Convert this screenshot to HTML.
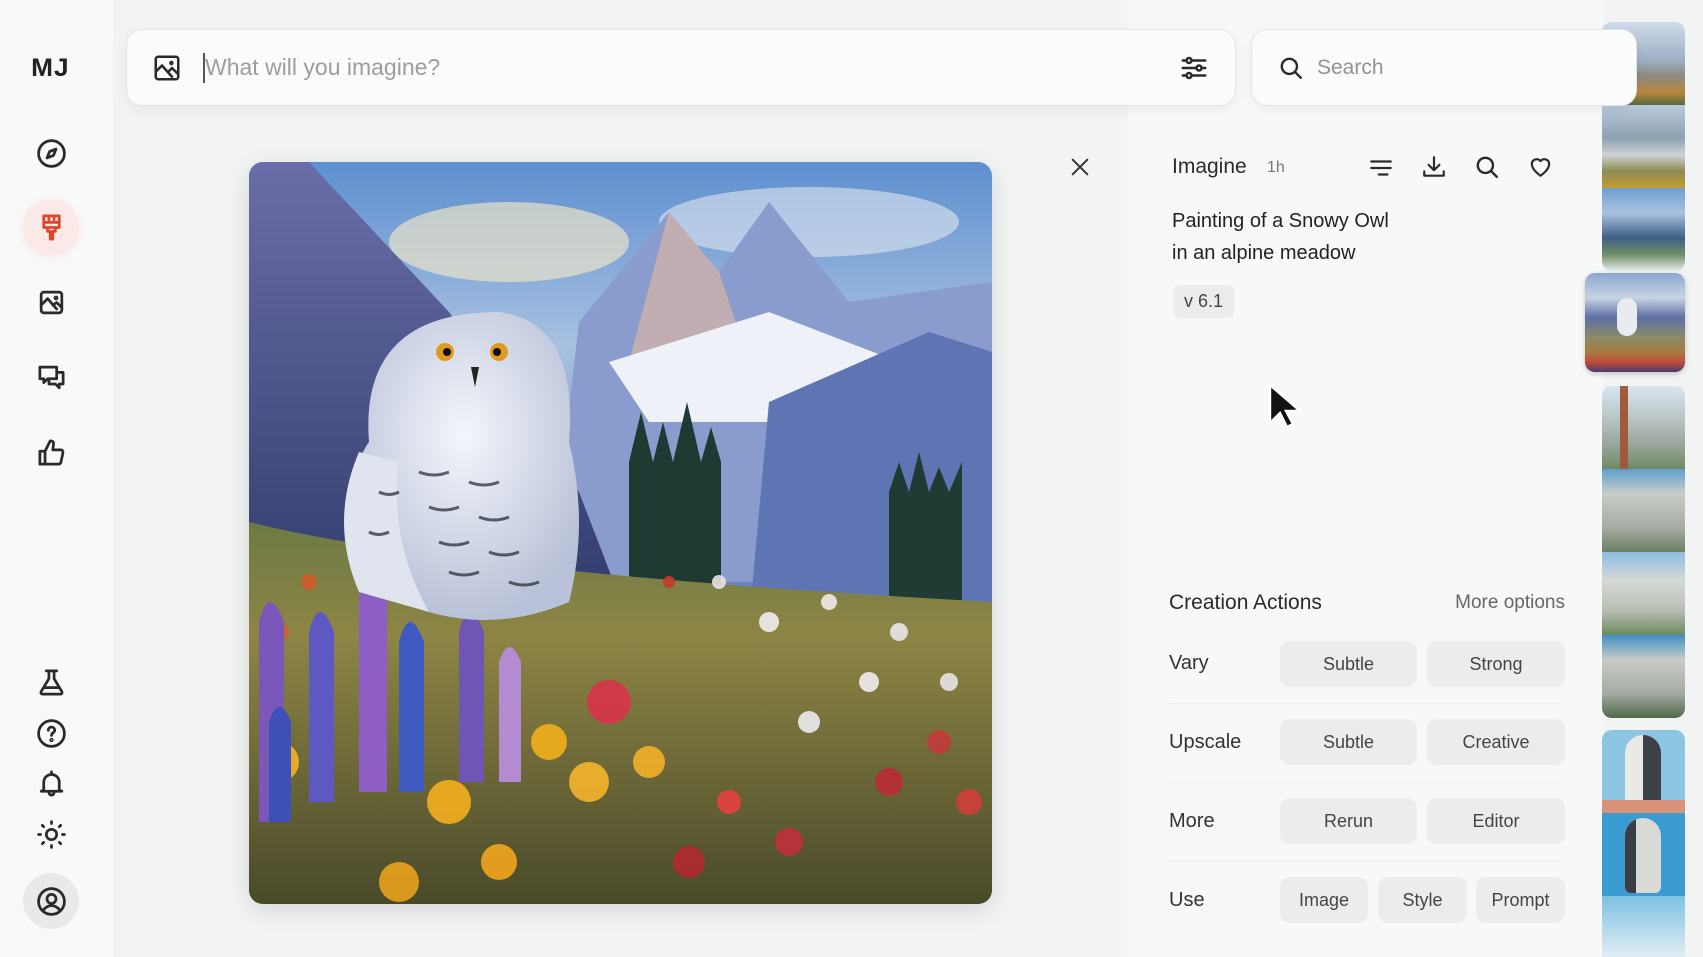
<!DOCTYPE html>
<html><head><meta charset="utf-8"><style>
*{margin:0;padding:0;box-sizing:border-box}
body{width:1703px;height:957px;overflow:hidden;background:#f2f3f3;font-family:"Liberation Sans",sans-serif;color:#222;position:relative}
.abs{position:absolute}
.side{left:0;top:0;width:113px;height:957px;background:#f8f9f9}
.ico{position:absolute;left:31px;width:40px;height:40px;display:flex;align-items:center;justify-content:center}
.ico svg{width:31px;height:31px;fill:none;stroke:#2a2a2a;stroke-width:2.1;stroke-linecap:round;stroke-linejoin:round}
.bar{background:#fafbfb;border:1px solid #e3e4e5;border-radius:16px;box-shadow:0 4px 14px rgba(0,0,0,.05)}
.right{left:1127px;top:0;width:476px;height:957px;background:#f7f8f8}
.btn{position:absolute;height:46px;background:#ebeded;border-radius:10px;display:flex;align-items:center;justify-content:center;font-size:18px;color:#444}
.lbl{position:absolute;left:1169px;font-size:20px;color:#333}
.sep{position:absolute;left:1169px;width:395px;height:1px;background:#ececec}
.th{position:absolute;left:1602px;width:83px}
</style></head><body>
<div class="abs side"></div>
<div class="abs" style="left:32px;top:54px;font-size:25px;font-weight:bold;letter-spacing:1px;color:#222;transform:scaleX(1.05)">MJ</div>

<div class="ico" style="top:133px"><svg viewBox="0 0 24 24"><circle cx="12" cy="12" r="10"/><path d="M15.5 8.5l-2 5-5 2 2-5z"/></svg></div>
<div class="abs" style="left:23px;top:199px;width:56px;height:56px;border-radius:50%;background:#fbe9e7;box-shadow:0 2px 8px rgba(220,80,60,.1)"></div>
<div class="ico" style="top:207px"><svg viewBox="0 0 24 24" style="stroke:#e0442a"><path d="M6 3h12v9H6z M6 8h12 M10 3v3 M14 3v3 M9 12v3h2v6h2v-6h2v-3"/></svg></div>
<div class="ico" style="top:282px"><svg viewBox="0 0 24 24"><rect x="4" y="4" width="16" height="16" rx="2"/><path d="M4 14l5-5 7 8 M13 14l3-2 4 4"/><circle cx="15.5" cy="8.5" r=".8"/></svg></div>
<div class="ico" style="top:357px"><svg viewBox="0 0 24 24"><path d="M3 4h13v9H9l-3 3v-3H3z M16 8h5v9h-3v3l-3-3h-5v-4"/></svg></div>
<div class="ico" style="top:432px"><svg viewBox="0 0 24 24"><path d="M3 11h4v10H3z M7 11l4-8c2 0 3 1 2.5 3L13 10h6c1.5 0 2 1 1.8 2.5l-1.5 7c-.3 1-1 1.5-2 1.5H7"/></svg></div>
<div class="ico" style="top:662px"><svg viewBox="0 0 24 24"><path d="M8 3h8 M10 3v6l-6 10c-.5 1 0 2 1 2h14c1 0 1.5-1 1-2l-6-10V3 M6 16h12"/></svg></div>
<div class="ico" style="top:713px"><svg viewBox="0 0 24 24"><circle cx="12" cy="12" r="10"/><path d="M9.5 9.5a2.5 2.5 0 0 1 5 0c0 1.8-2.5 2-2.5 4"/><circle cx="12" cy="17" r=".6"/></svg></div>
<div class="ico" style="top:763px"><svg viewBox="0 0 24 24"><path d="M6 17V11a6 6 0 0 1 12 0v6l2 1H4z M10 19a2 2 0 0 0 4 0 M12 3v2"/></svg></div>
<div class="ico" style="top:814px"><svg viewBox="0 0 24 24"><circle cx="12" cy="12" r="4"/><path d="M12 2v1.5M12 20.5V22M2 12h1.5M20.5 12H22M4.9 4.9l1 1M18.1 18.1l1 1M4.9 19.1l1-1M18.1 5.9l1-1"/></svg></div>
<div class="abs" style="left:23px;top:873px;width:56px;height:56px;border-radius:50%;background:#e8e9e9"></div>
<div class="ico" style="top:881px"><svg viewBox="0 0 24 24"><circle cx="12" cy="12" r="10"/><circle cx="12" cy="10" r="3.5"/><path d="M5.5 19c2-3 4-3.8 6.5-3.8s4.5.8 6.5 3.8"/></svg></div>

<div class="abs right"></div>

<!-- thumbnails -->
<div class="th" style="top:22px;height:83px;border-radius:10px 10px 0 0;background:linear-gradient(180deg,#cfdceb 0%,#9fb1c6 45%,#8d8a80 65%,#b8863c 85%,#5a6a40 100%)"></div>
<div class="th" style="top:105px;height:83px;background:linear-gradient(180deg,#b9cadc 0%,#8ea2b4 40%,#cfd3d5 60%,#8b8c52 80%,#c79b2f 100%)"></div>
<div class="th" style="top:188px;height:83px;border-radius:0 0 10px 10px;background:linear-gradient(180deg,#6f9dd0 0%,#a9c3e0 30%,#3e5f86 60%,#6f8f64 80%,#e7ecef 100%)"></div>
<div class="abs" style="left:1585px;top:273px;width:100px;height:99px;border-radius:10px;background:linear-gradient(180deg,#8ba7cf 0%,#c7d3e3 25%,#5d6fa4 45%,#8b8a68 65%,#a87b3f 80%,#c04a3a 90%,#4b3c6a 100%);box-shadow:0 2px 6px rgba(0,0,0,.2)"></div>
<div class="abs" style="left:1617px;top:298px;width:20px;height:38px;border-radius:10px;background:#e8ebf0"></div>
<div class="th" style="top:386px;height:83px;border-radius:10px 10px 0 0;background:linear-gradient(180deg,#d8e6f2 0%,#b9c3c4 40%,#9aa59c 70%,#6f8a63 100%)"></div>
<div class="abs" style="left:1620px;top:386px;width:8px;height:83px;background:#9e5a3a"></div>
<div class="th" style="top:469px;height:83px;background:linear-gradient(180deg,#5c9fcf 0%,#c9cdc8 30%,#a7aca6 70%,#6a8062 100%)"></div>
<div class="th" style="top:552px;height:83px;background:linear-gradient(180deg,#8fbde0 0%,#d6d9d6 35%,#b8beb4 70%,#6b8a5f 100%)"></div>
<div class="th" style="top:635px;height:83px;border-radius:0 0 10px 10px;background:linear-gradient(180deg,#3f8fc7 0%,#c8cbc6 30%,#a6aba4 70%,#4f6a48 100%)"></div>
<div class="th" style="top:730px;height:83px;border-radius:10px 10px 0 0;background:linear-gradient(180deg,#8cc6e3 0%,#8cc6e3 100%)"></div>
<div class="abs" style="left:1625px;top:735px;width:36px;height:72px;border-radius:18px 18px 6px 6px;background:linear-gradient(90deg,#e9e9e6 50%,#3d4147 50%)"></div>
<div class="abs" style="left:1602px;top:800px;width:83px;height:13px;background:#d9937d"></div>
<div class="th" style="top:813px;height:83px;background:#3b9ad0"></div>
<div class="abs" style="left:1625px;top:818px;width:36px;height:75px;border-radius:18px 18px 6px 6px;background:linear-gradient(90deg,#3a3e44 30%,#d9d9d5 30%)"></div>
<div class="th" style="top:896px;height:61px;background:linear-gradient(180deg,#7ec1e2 0%,#e0eef4 100%)"></div>

<!-- prompt bar -->
<div class="abs bar" style="left:126px;top:29px;width:1110px;height:77px"></div>
<svg class="abs" style="left:152px;top:53px" width="30" height="30" viewBox="0 0 24 24" fill="none" stroke="#2a2a2a" stroke-width="2" stroke-linecap="round" stroke-linejoin="round"><rect x="3" y="3" width="18" height="18" rx="2"/><path d="M3 15l5-5 8 9 M13 15l3-3 5 5"/><circle cx="15.5" cy="8" r=".8"/></svg>
<div class="abs" style="left:203px;top:53px;width:1.5px;height:30px;background:#555"></div>
<div class="abs" style="left:205px;top:54px;font-size:23px;color:#9a9ea3">What will you imagine?</div>
<svg class="abs" style="left:1179px;top:53px" width="30" height="30" viewBox="0 0 24 24" fill="none" stroke="#2a2a2a" stroke-width="2" stroke-linecap="round"><path d="M3 6h18M3 12h18M3 18h18"/><circle cx="8" cy="6" r="2" fill="#fafbfb"/><circle cx="16" cy="12" r="2" fill="#fafbfb"/><circle cx="8" cy="18" r="2" fill="#fafbfb"/></svg>
<div class="abs bar" style="left:1251px;top:29px;width:386px;height:77px"></div>
<svg class="abs" style="left:1278px;top:55px" width="26" height="26" viewBox="0 0 24 24" fill="none" stroke="#2a2a2a" stroke-width="2.2" stroke-linecap="round"><circle cx="10.5" cy="10.5" r="7"/><path d="M16 16l5 5"/></svg>
<div class="abs" style="left:1317px;top:56px;font-size:21px;color:#8f9398">Search</div>

<!-- main image -->
<div class="abs" style="left:249px;top:162px;width:743px;height:742px;border-radius:14px;overflow:hidden;box-shadow:0 6px 24px rgba(0,0,0,.12)">
<svg width="743" height="742" viewBox="0 0 743 742">
<defs>
<linearGradient id="sky" x1="0" y1="0" x2="0" y2="1"><stop offset="0" stop-color="#5d8fd0"/><stop offset=".25" stop-color="#a8c1e0"/><stop offset=".5" stop-color="#6c85bd"/></linearGradient>
<linearGradient id="mt" x1="0" y1="0" x2="0" y2="1"><stop offset="0" stop-color="#6a6ea8"/><stop offset="1" stop-color="#2f3a6a"/></linearGradient>
<linearGradient id="mead" x1="0" y1="0" x2="0" y2="1"><stop offset="0" stop-color="#6d7a45"/><stop offset=".3" stop-color="#8d8545"/><stop offset="1" stop-color="#4a4a2a"/></linearGradient>
<radialGradient id="ow" cx=".5" cy=".4" r=".6"><stop offset="0" stop-color="#f4f6fb"/><stop offset="1" stop-color="#b9c1d8"/></radialGradient>
</defs>
<rect width="743" height="742" fill="url(#sky)"/>
<ellipse cx="260" cy="80" rx="120" ry="40" fill="#e9e2c8" opacity=".7"/>
<ellipse cx="560" cy="60" rx="150" ry="35" fill="#dfe6ef" opacity=".6"/>
<path d="M330 160 L420 50 L470 110 L520 40 L600 140 L743 120 L743 420 L300 420Z" fill="#8a9ccd"/>
<path d="M420 50 L470 110 L500 200 L380 200Z" fill="#d9b7a6" opacity=".7"/>
<path d="M360 200 L520 150 L650 200 L620 260 L400 260Z" fill="#eef1f7"/>
<path d="M0 0 L60 0 L200 150 L330 330 L380 460 L0 460Z" fill="url(#mt)"/>
<path d="M520 240 L680 170 L743 190 L743 460 L500 460Z" fill="#5f75b3"/>
<path d="M380 300 l12 -50 l12 50 l10 -40 l10 40 l14 -60 l14 60 l10 -35 l10 35 v160 h-92z" fill="#1f3a32"/>
<path d="M640 330 l10 -30 l10 30 l10 -40 l10 40 l10 -25 l10 25 l13 -30 v150 h-73z" fill="#203a34"/>
<path d="M0 360 Q200 410 743 440 L743 742 L0 742Z" fill="url(#mead)"/>
<g opacity=".9">
<circle cx="60" cy="420" r="8" fill="#d05a2a"/><circle cx="30" cy="470" r="10" fill="#c9622c"/><circle cx="420" cy="420" r="6" fill="#c9392b"/>
<circle cx="470" cy="420" r="7" fill="#e7e3e3"/><circle cx="520" cy="460" r="10" fill="#f1eef0"/><circle cx="580" cy="440" r="8" fill="#eceae8"/><circle cx="650" cy="470" r="9" fill="#e9e5ea"/><circle cx="620" cy="520" r="10" fill="#f0eef0"/><circle cx="700" cy="520" r="9" fill="#e7e4e8"/><circle cx="560" cy="560" r="11" fill="#ecebed"/>
<circle cx="690" cy="580" r="12" fill="#c33b3a"/><circle cx="640" cy="620" r="14" fill="#b92c33"/><circle cx="720" cy="640" r="13" fill="#d13e3a"/><circle cx="540" cy="680" r="14" fill="#c0303a"/><circle cx="440" cy="700" r="16" fill="#b22a30"/>
<circle cx="360" cy="540" r="22" fill="#d8334a"/><circle cx="300" cy="580" r="18" fill="#f2b01d"/><circle cx="340" cy="620" r="20" fill="#f5b52a"/><circle cx="400" cy="600" r="16" fill="#f3b027"/><circle cx="30" cy="600" r="20" fill="#f2b326"/><circle cx="200" cy="640" r="22" fill="#f4b01f"/><circle cx="250" cy="700" r="18" fill="#f2a61e"/><circle cx="150" cy="720" r="20" fill="#e9a21d"/><circle cx="480" cy="640" r="12" fill="#e74040"/>
</g>
<path d="M10 460 q10 -40 25 0 v200 h-25z" fill="#7a57b8"/><path d="M60 470 q10 -40 25 0 v170 h-25z" fill="#5e59c2"/><path d="M110 430 q12 -50 28 0 v200 h-28z" fill="#8d5fc4"/><path d="M150 480 q10 -40 25 0 v150 h-25z" fill="#3f5ac0"/><path d="M210 470 q10 -40 25 0 v150 h-25z" fill="#6f56b5"/><path d="M250 500 q10 -30 22 0 v120 h-22z" fill="#b48bd1"/><path d="M20 560 q10 -30 22 0 v100 h-22z" fill="#3e50b8"/>
<path d="M120 280 Q110 150 250 150 Q330 160 320 280 Q340 360 320 440 Q250 470 180 450 Q110 420 100 350 Q105 300 120 280Z" fill="url(#ow)"/>
<path d="M110 290 Q80 360 110 430 L180 450 Q140 380 150 300Z" fill="#dfe4ee"/>
<g stroke="#2b2f3a" stroke-width="3" fill="none" opacity=".75">
<path d="M170 310 q15 6 30 0 M220 320 q15 6 30 0 M180 345 q15 6 30 0 M230 355 q15 6 30 0 M190 380 q15 6 30 0 M240 390 q15 6 30 0 M130 330 q10 5 20 0 M120 370 q10 5 20 0 M200 410 q15 6 30 0 M260 420 q15 6 30 0"/>
</g>
<circle cx="196" cy="190" r="9" fill="#e09b1f"/><circle cx="250" cy="190" r="9" fill="#e09b1f"/>
<circle cx="198" cy="190" r="4" fill="#111"/><circle cx="248" cy="190" r="4" fill="#111"/>
<path d="M222 205 l4 20 l4 -20z" fill="#222"/>
</svg>
</div>
<svg class="abs" style="left:1069px;top:156px" width="22" height="22" viewBox="0 0 24 24" stroke="#333" stroke-width="2.2" stroke-linecap="round"><path d="M4 4l16 16M20 4L4 20"/></svg>

<!-- right panel text -->
<div class="abs" style="left:1172px;top:155px;font-size:21px;color:#2a2a2a">Imagine</div>
<div class="abs" style="left:1267px;top:159px;font-size:16px;color:#777">1h</div>
<svg class="abs" style="left:1368px;top:155px" width="26" height="26" viewBox="0 0 24 24" fill="none" stroke="#2a2a2a" stroke-width="2" stroke-linecap="round"><path d="M3 6h18M3 12h18M10 18h8"/></svg>
<svg class="abs" style="left:1421px;top:154px" width="26" height="26" viewBox="0 0 24 24" fill="none" stroke="#2a2a2a" stroke-width="2" stroke-linecap="round" stroke-linejoin="round"><path d="M12 3v12M7 10l5 5 5-5M3 16v4h18v-4"/></svg>
<svg class="abs" style="left:1474px;top:154px" width="26" height="26" viewBox="0 0 24 24" fill="none" stroke="#2a2a2a" stroke-width="2.2" stroke-linecap="round"><circle cx="10.5" cy="10.5" r="7"/><path d="M16 16l5 5"/></svg>
<svg class="abs" style="left:1527px;top:154px" width="27" height="26" viewBox="0 0 24 24" fill="none" stroke="#2a2a2a" stroke-width="2" stroke-linejoin="round"><path d="M12 20s-8-5-8-11a4.5 4.5 0 0 1 8-2.5A4.5 4.5 0 0 1 20 9c0 6-8 11-8 11z"/></svg>
<div class="abs" style="left:1172px;top:205px;font-size:20px;line-height:32px;color:#222">Painting of a Snowy Owl<br>in an alpine meadow</div>
<div class="abs" style="left:1173px;top:285px;width:61px;height:33px;border-radius:7px;background:#ebeced;font-size:18px;color:#444;display:flex;align-items:center;justify-content:center">v 6.1</div>
<svg class="abs" style="left:1268px;top:383px" width="34" height="48" viewBox="0 0 17 24"><path d="M1 1v19l5-5 3.5 7 3-1.5-3.5-6.5h7z" fill="#111" stroke="#fff" stroke-width="1.2"/></svg>

<div class="abs" style="left:1169px;top:591px;font-size:21px;color:#2a2a2a">Creation Actions</div>
<div class="abs" style="left:1440px;top:592px;width:125px;text-align:right;font-size:19px;color:#666">More options</div>
<div class="lbl" style="top:652px">Vary</div>
<div class="btn" style="left:1280px;top:641px;width:137px">Subtle</div>
<div class="btn" style="left:1427px;top:641px;width:138px">Strong</div>
<div class="sep" style="top:703px"></div>
<div class="lbl" style="top:731px">Upscale</div>
<div class="btn" style="left:1280px;top:719px;width:137px">Subtle</div>
<div class="btn" style="left:1427px;top:719px;width:138px">Creative</div>
<div class="sep" style="top:782px"></div>
<div class="lbl" style="top:810px">More</div>
<div class="btn" style="left:1280px;top:798px;width:137px">Rerun</div>
<div class="btn" style="left:1427px;top:798px;width:138px">Editor</div>
<div class="sep" style="top:861px"></div>
<div class="lbl" style="top:889px">Use</div>
<div class="btn" style="left:1280px;top:877px;width:88px">Image</div>
<div class="btn" style="left:1378px;top:877px;width:89px">Style</div>
<div class="btn" style="left:1476px;top:877px;width:89px">Prompt</div>
</body></html>
